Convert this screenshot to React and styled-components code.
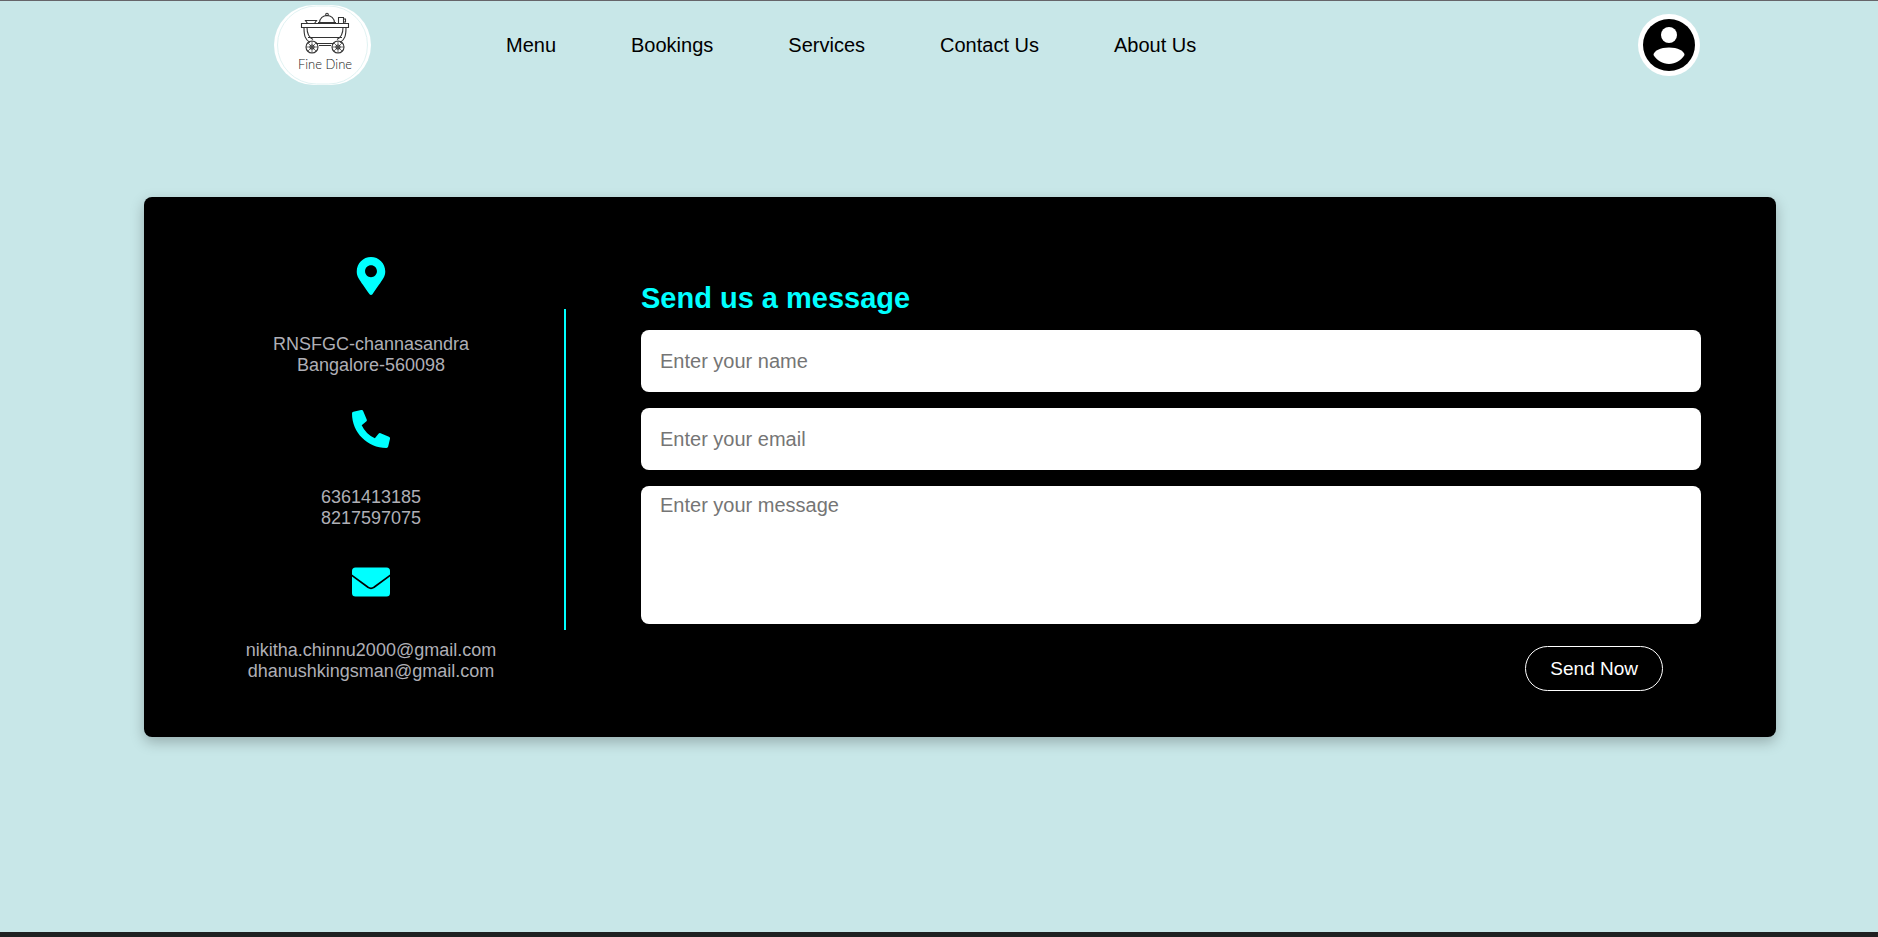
import React from "react";
import styled, { createGlobalStyle } from "styled-components";
import { FaMapMarkerAlt, FaPhoneAlt } from "react-icons/fa";

const GlobalStyle = createGlobalStyle`
  * { box-sizing: border-box; margin: 0; padding: 0; }
  html, body, #root { height: 100%; }
  body {
    background: #c8e7e8;
    font-family: "Liberation Sans", Arial, sans-serif;
    color: #000;
  }
`;

const Page = styled.div`
  min-height: 100%;
  display: flex;
  flex-direction: column;
  border-top: 1px solid #66656a;
  border-bottom: 5px solid #202122;
`;

const Header = styled.header`
  display: flex;
  align-items: center;
  height: 88px;
  padding: 0 178px 0 274px;
`;

const LogoLink = styled.a`
  display: block;
  width: 97px;
  height: 80px;
`;

const Nav = styled.nav`
  display: flex;
  flex: 1;
  gap: 75px;
  margin-left: 135px;
`;

const NavLink = styled.a`
  font-size: 20px;
  line-height: 24px;
  color: #000;
  text-decoration: none;
`;

const ProfileButton = styled.button`
  width: 62px;
  height: 62px;
  border: 0;
  background: none;
  svg { display: block; }
`;

const Card = styled.main`
  display: grid;
  grid-template-columns: 304px 2px 1fr;
  align-items: center;
  margin: 108px 102px 40px 144px;
  padding: 4px 75px 0;
  min-height: 540px;
  background: #000;
  border-radius: 8px;
  box-shadow: 0 5px 14px rgba(0, 0, 0, 0.25);
`;

const ContactList = styled.address`
  display: flex;
  flex-direction: column;
  gap: 34px;
  font-style: normal;
`;

const ContactItem = styled.section`
  display: flex;
  flex-direction: column;
  align-items: center;
  gap: 39px;
  font-size: 18px;
  line-height: 21px;
  text-align: center;
  color: #afafb6;
  svg { display: block; color: #00ffff; }
`;

const Divider = styled.div`
  height: 321px;
  margin-left: 41px;
  width: 2px;
  background: #00ffff;
`;

const Form = styled.form`
  display: flex;
  flex-direction: column;
  margin-top: 34px;
  margin-left: 116px;
`;

const Title = styled.h1`
  font-size: 29px;
  line-height: 34px;
  color: #00ffff;
  margin-bottom: 15px;
`;

const Input = styled.input`
  height: 62px;
  padding: 0 19px;
  margin-bottom: 16px;
  border: 0;
  border-radius: 8px;
  background: #fff;
  font: 20px "Liberation Sans", Arial, sans-serif;
  &::placeholder { color: #757575; }
`;

const Message = styled.textarea`
  height: 138px;
  padding: 8px 19px;
  margin-bottom: 22px;
  border: 0;
  border-radius: 8px;
  background: #fff;
  resize: none;
  font: 20px "Liberation Sans", Arial, sans-serif;
  &::placeholder { color: #757575; }
`;

const SendButton = styled.button`
  align-self: flex-end;
  height: 45px;
  padding: 0 24px;
  margin-right: 38px;
  border: 1px solid #fff;
  border-radius: 23px;
  background: transparent;
  color: #fff;
  font: 19px "Liberation Sans", Arial, sans-serif;
`;

const LogoText = styled.text`
  font-family: Lato, sans-serif;
  font-size: 13px;
  font-weight: 300;
`;

function Wheel({ cx }) {
  return (
    <g>
      <circle cx={cx} cy="42" r="6" />
      <circle cx={cx} cy="42" r="2" />
      <path d={`M${cx - 6} 42h12M${cx} 36v12M${cx - 4} 38l8 8M${cx + 4} 38l-8 8`} strokeWidth=".7" />
    </g>
  );
}

function Logo() {
  return (
    <svg width="97" height="80" viewBox="0 0 97 80" role="img" aria-label="Fine Dine">
      <rect width="97" height="80" rx="40" fill="#fff" />
      <rect x="3.5" y="1" width="90" height="78" rx="39" fill="none" stroke="#d9efef" strokeWidth=".8" />
      <g fill="none" stroke="#333" strokeWidth="1.1">
        <path d="M27.500 18.500h47v4h-47z" />
        <path d="M30 22.500c0 8 1 12 6 15M72 22.500c0 8-1 12-6 15M33 22.500c0 7 2 10 6 12M69 22.500c0 7-2 10-6 12" />
        <path d="M34 32.500h34M42 38.500h18M45 40.500h12" />
        <path d="M45.500 18c0-10 15-10 15 0M44 17.500h18" />
        <circle cx="53" cy="9.500" r="1.300" />
        <path d="M31.500 15.500h11l-2 3h-7zM64.500 12.500h5v6h-5zM69.500 14h2v3h-2" />
        <Wheel cx={38} />
        <Wheel cx={64} />
      </g>
      <LogoText x="51" y="64" textAnchor="middle" fill="#222">Fine Dine</LogoText>
    </svg>
  );
}

function ProfileIcon() {
  return (
    <svg width="62" height="62" viewBox="0 0 62 62" aria-hidden="true">
      <circle cx="31" cy="31" r="31" fill="#fff" />
      <circle cx="31" cy="31" r="26" fill="#000" />
      <circle cx="31" cy="21" r="8" fill="#fff" />
      <path d="M15.500 41c0-4 7-7.500 15.500-7.500S46.500 37 46.500 41C43 46.500 37.500 50 31 50S19 46.500 15.500 41z" fill="#fff" />
    </svg>
  );
}

function EnvelopeIcon() {
  return (
    <svg width="38" height="38" viewBox="0 0 38 38" aria-hidden="true">
      <rect y="4.500" width="38" height="29" rx="3.500" fill="currentColor" />
      <path d="M-1 11.800L16 24.300Q19 26.300 22 24.300L39 11.800" fill="none" stroke="#000" strokeWidth="1.700" />
    </svg>
  );
}

const links = ["Menu", "Bookings", "Services", "Contact Us", "About Us"];

const contacts = [
  { icon: <FaMapMarkerAlt size={38} />, lines: ["RNSFGC-channasandra", "Bangalore-560098"] },
  { icon: <FaPhoneAlt size={38} />, lines: ["6361413185", "8217597075"] },
  { icon: <EnvelopeIcon />, lines: ["nikitha.chinnu2000@gmail.com", "dhanushkingsman@gmail.com"] },
];

export default function App() {
  return (
    <Page>
      <GlobalStyle />
      <Header>
        <LogoLink href="#home"><Logo /></LogoLink>
        <Nav>
          {links.map((label) => (
            <NavLink key={label} href="#">{label}</NavLink>
          ))}
        </Nav>
        <ProfileButton type="button" aria-label="Profile"><ProfileIcon /></ProfileButton>
      </Header>
      <Card>
        <ContactList>
          {contacts.map(({ icon, lines }) => (
            <ContactItem key={lines[0]}>
              {icon}
              <div>
                {lines.map((line) => <p key={line}>{line}</p>)}
              </div>
            </ContactItem>
          ))}
        </ContactList>
        <Divider />
        <Form>
          <Title>Send us a message</Title>
          <Input type="text" placeholder="Enter your name" aria-label="Name" />
          <Input type="email" placeholder="Enter your email" aria-label="Email" />
          <Message placeholder="Enter your message" aria-label="Message" />
          <SendButton type="button">Send Now</SendButton>
        </Form>
      </Card>
    </Page>
  );
}
